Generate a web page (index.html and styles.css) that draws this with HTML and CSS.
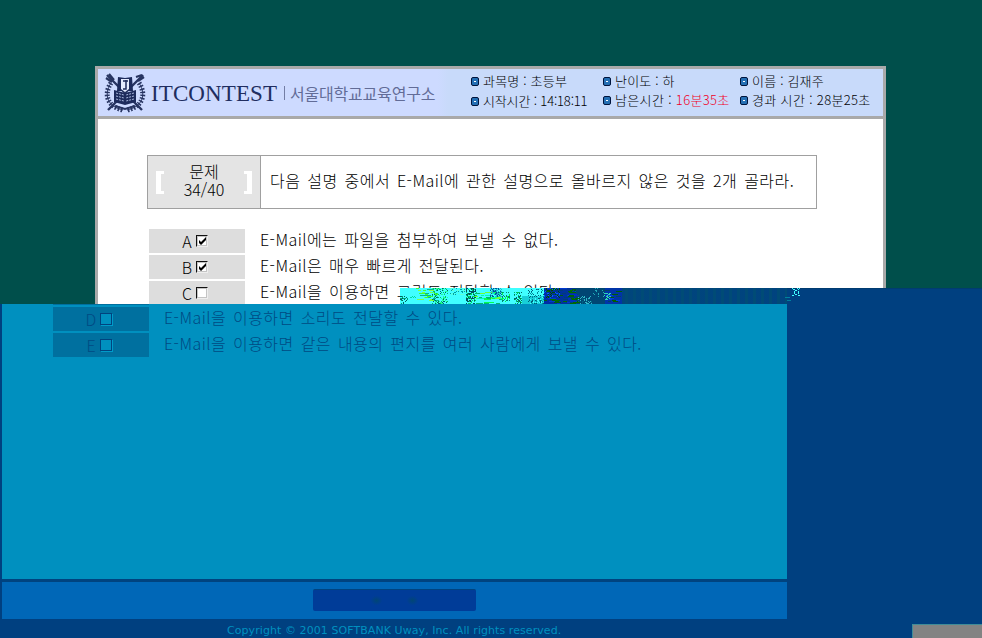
FILE: index.html
```
<!DOCTYPE html>
<html lang="ko">
<head>
<meta charset="utf-8">
<title>ITCONTEST</title>
<link rel="stylesheet" href="styles.css">
</head>
<body>
<main class="screen">
  <section class="upper">
    <div class="exam">
      <header class="head">
        <svg class="crest" width="42" height="42" viewBox="0 0 42 42">
          <g fill="none" stroke="#273461">
            <path d="M3 3L38 38M39 3L4 38" stroke-width="2.4"/>
            <path d="M5 2l5 6M2 6l6 4M32 5l6-2M34 9l6-4" stroke-width="2.2"/>
            <path d="M7 11C-1 23 4 35 19 38M35 11C43 23 38 35 23 38" stroke-width="5" stroke-dasharray="1.5 1.6"/>
            <path d="M7 11C-1 23 4 35 19 38M35 11C43 23 38 35 23 38" stroke-width="1"/>
            <path d="M11 34l10 3 10-3" stroke-width="2"/>
          </g>
          <path d="M14 5l7 1 7-1 1 14h-16z" fill="#1d2b5c"/>
          <path d="M10 18l11 3 11-3v12l-11 3-11-3z" fill="#1d2b5c"/>
          <path d="M17 7h8v10l-4 3-4-3z" fill="#e4ebff"/>
          <path d="M22 8v9h-3M19 9h5" fill="none" stroke="#1d2b5c" stroke-width="1.5"/>
          <path d="M12 21l8 2M12 24l8 2M12 27l8 2M30 21l-8 2M30 24l-8 2M30 27l-8 2" stroke="#a9b8df" stroke-dasharray="2 1"/>
        </svg>
        <span class="brand">ITCONTEST</span>
        <span class="bar"></span>
        <span class="institute">서울대학교교육연구소</span>
        <div class="info info-a">
          <p><i></i><span class="t1">과목명 : 초등부</span></p>
          <p><i></i><span class="t2">시작시간 : 14:18:11</span></p>
        </div>
        <div class="info info-b">
          <p><i></i><span class="t3">난이도 : 하</span></p>
          <p><i></i><span class="t4">남은시간 : <b>16분35초</b></span></p>
        </div>
        <div class="info info-c">
          <p><i></i><span class="t5">이름 : 김재주</span></p>
          <p><i></i><span class="t6">경과 시간 : 28분25초</span></p>
        </div>
      </header>
      <div class="question">
        <div class="number">
          <span class="bracket left"></span>
          <div class="count"><span>문제</span><span class="digits">34/40</span></div>
          <span class="bracket right"></span>
        </div>
        <p class="prompt">다음 설명 중에서 E-Mail에 관한 설명으로 올바르지 않은 것을 2개 골라라.</p>
      </div>
      <div class="answers">
        <div class="row"><div class="key">A<span class="box"><svg width="9" height="9" viewBox="0 0 9 9"><path d="M1 3v3l2 2 5-5V0L3 5z"/></svg></span></div><p>E-Mail에는 파일을 첨부하여 보낼 수 없다.</p></div>
        <div class="row"><div class="key">B<span class="box"><svg width="9" height="9" viewBox="0 0 9 9"><path d="M1 3v3l2 2 5-5V0L3 5z"/></svg></span></div><p>E-Mail은 매우 빠르게 전달된다.</p></div>
        <div class="row"><div class="key">C<span class="box"></span></div><p>E-Mail을 이용하면 그림도 전달할 수 있다.</p></div>
      </div>
    </div>
  </section>
  <section class="lower">
    <div class="pane">
      <div class="sliver"></div>
      <div class="row"><div class="key">D<span class="box"></span></div><p>E-Mail을 이용하면 소리도 전달할 수 있다.</p></div>
      <div class="row"><div class="key">E<span class="box"></span></div><p>E-Mail을 이용하면 같은 내용의 편지를 여러 사람에게 보낼 수 있다.</p></div>
    </div>
    <div class="tools"><div class="button"><span></span><span></span></div></div>
    <p class="copyright">Copyright © 2001 SOFTBANK Uway, Inc. All rights reserved.</p>
  </section>
  <canvas class="noise" width="582" height="16"></canvas>
  <div class="corner"></div>
</main>
<script src="noise.js"></script>
</body>
</html>
```
FILE: styles.css
```
* { box-sizing: border-box; }
body { margin: 0; font-family: "Noto Sans CJK KR", sans-serif; font-weight: 300; color: #000; }
p { margin: 0; white-space: nowrap; }
.screen { position: relative; width: 982px; height: 638px; overflow: hidden; background: #004080; }

.upper { height: 304px; overflow: hidden; background: #004f4b; padding: 66px 0 0 95px; }
.exam { width: 791px; height: 560px; border: 3px solid #a9a9a9; background: #fff; }
.head { display: flex; align-items: center; height: 50px; border-bottom: 3px solid #a9a9a9; padding-left: 6px; background: linear-gradient(90deg, #cddaff 0 340px, #c8dafa 350px); }
.crest { flex: none; }
.brand { flex: none; width: 125px; margin-left: 5px; padding-top: 3px; font: 23px/30px "Liberation Serif", serif; color: #202d60; letter-spacing: .1px; }
.bar { width: 1px; height: 14px; margin-left: 8px; background: #737da5; }
.institute { width: 150px; margin-left: 5px; font: 400 16px/24px "Noto Sans CJK KR", sans-serif; letter-spacing: -.2px; color: #626c97; white-space: nowrap; }
.info { align-self: flex-start; padding-top: 3px; font-size: 13px; }
.info p { display: flex; align-items: center; height: 19px; }
.info span { padding-bottom: 2px; }
.info i { flex: none; width: 8px; height: 9px; margin-right: 4px; border: 1px solid #00143c; border-radius: 2px; background: linear-gradient(#fff, #fff) center / 2px 1px no-repeat #246fb4; }
.info b { font-weight: 300; color: #f0001e; }
.info-a { width: 132px; margin-left: 31px; }
.info-a p + p { height: 21px; }
.info-b { width: 137px; }
.t1, .t3, .t5 { letter-spacing: .2px; }
.t2 { letter-spacing: -.15px; }
.t4, .t6 { letter-spacing: .35px; }

.question { display: flex; width: 670px; height: 54px; margin: 36px 0 0 49px; border: 1px solid #a0a0a0; }
.number { display: flex; align-items: center; justify-content: space-between; width: 113px; padding: 0 8px; border-right: 1px solid #a0a0a0; background: #e4e4e4; }
.bracket { width: 8px; height: 23px; border: 3px solid #fff; border-width: 3px 0; }
.left { border-left: 5px solid #fff; }
.right { border-right: 5px solid #fff; }
.count { display: flex; flex-direction: column; align-items: center; font-size: 16px; line-height: 18px; padding-bottom: 4px; }
.prompt { padding-left: 9px; font-size: 16px; line-height: 48px; letter-spacing: .45px; word-spacing: 2px; }

.answers { margin: 20px 0 0 51px; }
.row { display: flex; height: 24px; margin-bottom: 2px; font-size: 16px; line-height: 20px; }
.row p { letter-spacing: .45px; word-spacing: 2px; }
.key { display: flex; align-items: center; justify-content: center; gap: 4px; width: 96px; margin-right: 15px; padding-right: 4px; background: #ddd; }
.box { width: 12px; height: 12px; border: 1px solid #eee; border-top-color: #111; border-left-color: #111; background: #fff; outline: 1px solid #c4c4c4; outline-offset: -2px; }
.box svg { display: block; position: relative; margin: 1px 0 0 1px; }

.lower { padding-left: 2px; }
.pane { width: 785px; height: 275px; padding-left: 51px; background: #0090bf; color: #004a83; }
.sliver { width: 96px; height: 1px; margin-bottom: 2px; background: #00709f; }
.pane .key { background: #00709f; }
.pane .box { background: #0090bf; border: 1px solid #00437f; outline: none; box-shadow: 1px 1px #009bca; }
.tools { display: flex; justify-content: center; width: 785px; height: 40px; padding-top: 7px; border-top: 3px solid #00437f; background: #0067b7; }
.button { display: flex; justify-content: center; gap: 25px; width: 163px; height: 22px; border-radius: 2px; background: #003c98; border-top: 1px solid #00437f; padding-top: 6px; }
.button span { width: 11px; height: 9px; background: radial-gradient(#004675, #003c98 75%); }
.copyright { padding-left: 225px; font: 11px/23px "DejaVu Sans", sans-serif; letter-spacing: .07px; color: #0090bf; }

.noise { position: absolute; left: 400px; top: 288px; }
.corner { position: absolute; right: 0; bottom: 0; width: 70px; height: 14px; border-top: 1px solid #408c98; border-left: 1px solid #408c98; background: #838383; }
```
FILE: noise.js
```
// Corrupted scan lines across the seam between the two halves.
const canvas = document.querySelector('.noise');
const ctx = canvas.getContext('2d');
let seed = 77;
const rnd = () => (seed = (seed * 16807) % 2147483647) / 2147483647;
const px = (x, y, w, h, c) => { ctx.fillStyle = c; ctx.fillRect(x, y, w, h); };

// x, y, width, height, density, colours
const speckle = (x, y, w, h, d, colors) => {
  for (let j = y; j < y + h; j++)
    for (let i = x; i < x + w; i++)
      if (rnd() < d) px(i, j, 1, 1, colors[Math.floor(rnd() * colors.length)]);
};
const dashes = (x, y, w, h, n, colors) => {
  for (let k = 0; k < n; k++)
    px(x + Math.floor(rnd() * (w - 6)), y + Math.floor(rnd() * h), 3 + Math.floor(rnd() * 5), 1, colors[k % colors.length]);
};

px(0, 0, 144, 16, '#40ffff');
speckle(0, 8, 8, 8, .45, ['#006060', '#00a070']);
speckle(8, 8, 8, 2, .4, ['#00d8a0']);
dashes(16, 0, 26, 13, 24, ['#40ff30', '#00b890', '#80ff40']);
speckle(32, 0, 16, 16, .4, ['#006868', '#00c060', '#20ff90']);
speckle(50, 0, 16, 7, .35, ['#00a0a0', '#60ffd0']);
speckle(66, 0, 11, 16, .5, ['#005060', '#00d060']);
dashes(74, 4, 32, 12, 38, ['#00ff50', '#70ff30', '#00b870', '#00ffb0']);
speckle(90, 0, 12, 9, .55, ['#0055a0', '#20b8c8']);
speckle(102, 3, 8, 11, .4, ['#00ff40', '#008c70']);
speckle(114, 4, 8, 12, .45, ['#006868', '#00c060']);
px(122, 8, 22, 8, '#18cfd8');
speckle(128, 0, 16, 16, .4, ['#008b9b', '#005c78', '#40ffff']);

const grad = ctx.createLinearGradient(144, 0, 387, 0);
grad.addColorStop(0, '#002ba8');
grad.addColorStop(.3, '#00467c');
grad.addColorStop(1, '#00437f');
px(144, 0, 243, 16, grad);
dashes(144, 0, 40, 16, 50, ['#006010', '#0038d0', '#003d78', '#007000']);
speckle(144, 0, 16, 10, .3, ['#0060ff', '#005000']);
px(176, 0, 30, 16, '#004673');
dashes(168, 6, 14, 10, 18, ['#006800', '#0030c0']);
speckle(178, 8, 14, 8, .45, ['#30b8c8', '#006080']);
speckle(192, 0, 13, 10, .13, ['#20a8b8']);
px(205, 0, 17, 16, '#0034a8');
dashes(203, 1, 20, 14, 14, ['#006000', '#0040e0', '#004466']);
speckle(204, 5, 7, 7, .35, ['#30d8b8']);
for (let x = 225; x < 386; x += 8) px(x, 0, 3, 16, '#004b76');

px(387, 0, 195, 16, '#004080');
px(387, 0, 195, 1, '#003c70');
px(385, 9, 5, 1, '#0080a0');
px(387, 12, 4, 1, '#0080a0');
[[392,0],[393,1],[394,1],[397,0],[398,1],[394,3],[394,4],[394,5],[395,2],[396,2],[398,3],[398,4],[398,5],[393,7],[395,6],[396,6],[398,7],[399,0],[392,7],[399,7]].forEach(([x, y]) => px(x, y, 1, 1, '#40ffff'));
```
